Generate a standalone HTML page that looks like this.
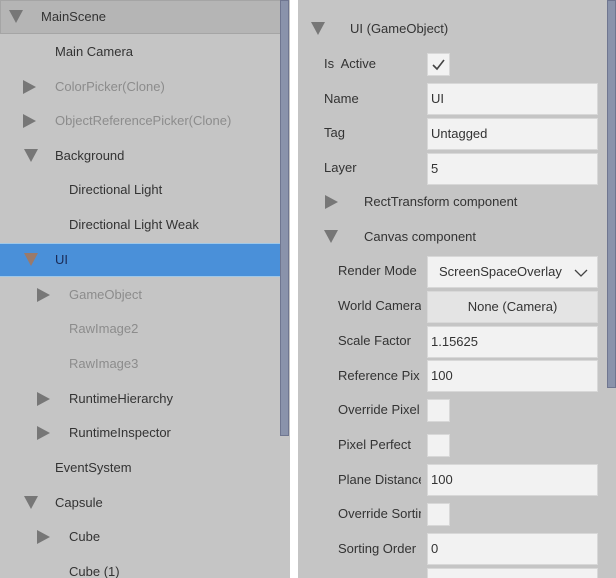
<!DOCTYPE html>
<html><head><style>
*{margin:0;padding:0;box-sizing:border-box}
body{width:616px;height:578px;overflow:hidden;background:#fff;font-family:"Liberation Sans",sans-serif;font-size:13px;color:#333;position:relative}
.p{position:absolute;top:0;height:578px;background:#c5c5c5;overflow:hidden}
.t{position:absolute;white-space:nowrap;line-height:16px;transform:translateY(-8px)}
.g{color:#8c8c8c}
.td{position:absolute;width:0;height:0;border-left:7px solid transparent;border-right:7px solid transparent;border-top:13px solid #777;transform:translateY(-7px)}
.tr{position:absolute;width:0;height:0;border-top:7px solid transparent;border-bottom:7px solid transparent;border-left:13px solid #777;transform:translateY(-7px)}
.f{position:absolute;left:129px;width:171px;height:32px;background:#f2f2f2;border:1px solid #d8d8d8;padding-left:3px;line-height:30px}
.c{position:absolute;left:129px;width:23px;height:23px;background:#f2f2f2;border:1px solid #d8d8d8}
.l{position:absolute;white-space:nowrap;width:83px;overflow:hidden;line-height:16px;transform:translateY(-8px)}
</style></head><body>
<div class="p" style="left:0;width:290px">
<div style="position:absolute;left:0;top:0;width:281px;height:34px;background:#b5b5b5;border:1px solid #a5a5a5"></div>
<div style="position:absolute;left:0;top:243px;width:281px;height:34px;background:#4a90d9;border-top:1px solid #9fc8e8;border-bottom:1px solid #9fc8e8"></div>
<div style="position:absolute;left:280px;top:0;width:9px;height:436px;background:#8a93ab;border:1px solid #6f7690"></div>
<div class="td" style="left:9px;top:17px"></div><div class="t" style="left:41px;top:17px">MainScene</div>
<div class="t" style="left:55px;top:52px">Main Camera</div>
<div class="tr" style="left:23px;top:87px"></div><div class="t g" style="left:55px;top:87px">ColorPicker(Clone)</div>
<div class="tr" style="left:23px;top:121px"></div><div class="t g" style="left:55px;top:121px">ObjectReferencePicker(Clone)</div>
<div class="td" style="left:24px;top:156px"></div><div class="t" style="left:55px;top:156px">Background</div>
<div class="t" style="left:69px;top:190px">Directional Light</div>
<div class="t" style="left:69px;top:225px">Directional Light Weak</div>
<div class="td" style="left:24px;top:260px;border-top-color:#9a7a6a"></div><div class="t" style="left:55px;top:260px;color:#1a2a55">UI</div>
<div class="tr" style="left:37px;top:295px"></div><div class="t g" style="left:69px;top:295px">GameObject</div>
<div class="t g" style="left:69px;top:329px">RawImage2</div>
<div class="t g" style="left:69px;top:364px">RawImage3</div>
<div class="tr" style="left:37px;top:399px"></div><div class="t" style="left:69px;top:399px">RuntimeHierarchy</div>
<div class="tr" style="left:37px;top:433px"></div><div class="t" style="left:69px;top:433px">RuntimeInspector</div>
<div class="t" style="left:55px;top:468px">EventSystem</div>
<div class="td" style="left:24px;top:503px"></div><div class="t" style="left:55px;top:503px">Capsule</div>
<div class="tr" style="left:37px;top:537px"></div><div class="t" style="left:69px;top:537px">Cube</div>
<div class="t" style="left:69px;top:572px">Cube (1)</div>
</div>
<div class="p" style="left:298px;width:318px">
<div style="position:absolute;left:309px;top:0;width:9px;height:388px;background:#8a93ab;border:1px solid #6f7690"></div>
<div class="td" style="left:13px;top:29px"></div><div class="t" style="left:52px;top:29px">UI (GameObject)</div>
<div class="t" style="left:26px;top:64px">Is&nbsp; Active</div>
<div class="c" style="top:53px"><svg width="21" height="21" style="position:absolute;left:0;top:0"><path d="M5 11 L9 15 L16 6" fill="none" stroke="#444" stroke-width="1.6"/></svg></div>
<div class="t" style="left:26px;top:99px">Name</div><div class="f" style="top:83px">UI</div>
<div class="t" style="left:26px;top:133px">Tag</div><div class="f" style="top:118px">Untagged</div>
<div class="t" style="left:26px;top:168px">Layer</div><div class="f" style="top:153px">5</div>
<div class="tr" style="left:27px;top:202px"></div><div class="t" style="left:66px;top:202px">RectTransform component</div>
<div class="td" style="left:26px;top:237px"></div><div class="t" style="left:66px;top:237px">Canvas component</div>
<div class="l" style="left:40px;top:271px">Render Mode</div><div class="f" style="top:256px;padding-left:11px">ScreenSpaceOverlay<svg width="14" height="10" style="position:absolute;right:9px;top:11px"><path d="M1 2 L7 8 L13 2" fill="none" stroke="#444" stroke-width="1.3"/></svg></div>
<div class="l" style="left:40px;top:306px">World Camera</div><div class="f" style="top:291px;background:#e4e4e4;text-align:center;padding:0">None (Camera)</div>
<div class="l" style="left:40px;top:341px">Scale Factor</div><div class="f" style="top:326px">1.15625</div>
<div class="l" style="left:40px;top:376px">Reference Pix</div><div class="f" style="top:360px">100</div>
<div class="l" style="left:40px;top:410px">Override Pixel</div><div class="c" style="top:399px"></div>
<div class="l" style="left:40px;top:445px">Pixel Perfect</div><div class="c" style="top:434px"></div>
<div class="l" style="left:40px;top:480px">Plane Distance</div><div class="f" style="top:464px">100</div>
<div class="l" style="left:40px;top:514px">Override Sorting</div><div class="c" style="top:503px"></div>
<div class="l" style="left:40px;top:549px">Sorting Order</div><div class="f" style="top:533px">0</div>
<div class="f" style="top:568px"></div>
</div>
</body></html>
